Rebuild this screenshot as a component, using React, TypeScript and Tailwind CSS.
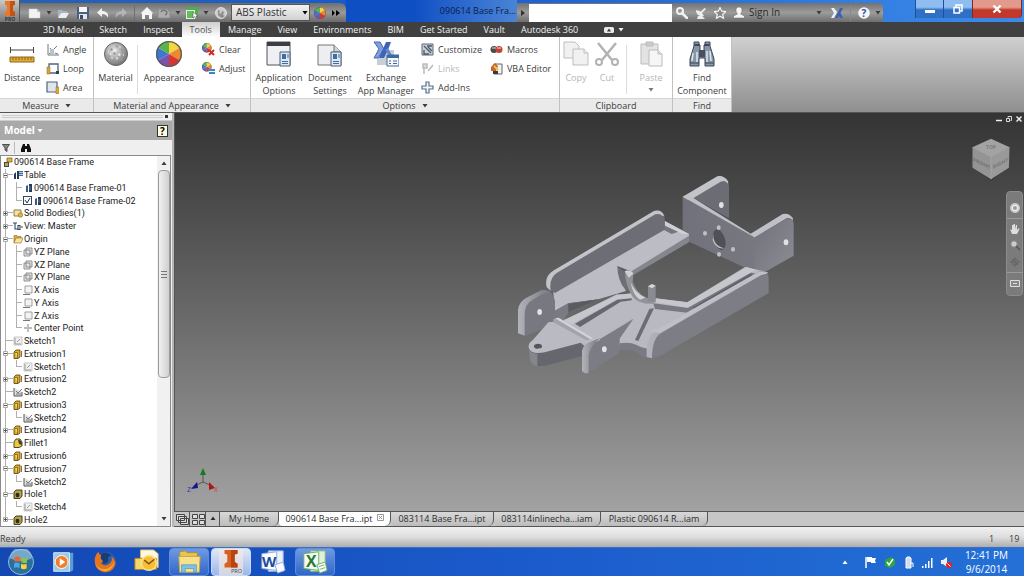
import { useState, type ReactNode } from 'react'
import clsx from 'clsx'

const TABS = ['3D Model', 'Sketch', 'Inspect', 'Tools', 'Manage', 'View', 'Environments', 'BIM', 'Get Started', 'Vault', 'Autodesk 360']

const DOCS = [
  { name: 'My Home', width: 'w-[59px]' },
  { name: '090614 Base Fra...ipt', width: 'w-[112px]' },
  { name: '083114 Base Fra...ipt', width: 'w-[103px]' },
  { name: '083114inlinecha...iam', width: 'w-[107px]' },
  { name: 'Plastic 090614 R...iam', width: 'w-[107px]' },
]

type NodeKind = 'table' | 'member' | 'bodies' | 'view' | 'folder' | 'plane' | 'axis' | 'point' | 'sketch' | 'sketchUsed' | 'extrusion' | 'fillet' | 'hole'

type TreeNode = {
  label: string
  kind: NodeKind
  level: 1 | 2
  sign?: '+' | '-'
  last?: boolean
  checked?: boolean
}

const TREE: TreeNode[] = [
  { label: 'Table', kind: 'table', level: 1, sign: '-' },
  { label: '090614 Base Frame-01', kind: 'member', level: 2 },
  { label: '090614 Base Frame-02', kind: 'member', level: 2, last: true, checked: true },
  { label: 'Solid Bodies(1)', kind: 'bodies', level: 1, sign: '+' },
  { label: 'View: Master', kind: 'view', level: 1, sign: '+' },
  { label: 'Origin', kind: 'folder', level: 1, sign: '-' },
  { label: 'YZ Plane', kind: 'plane', level: 2 },
  { label: 'XZ Plane', kind: 'plane', level: 2 },
  { label: 'XY Plane', kind: 'plane', level: 2 },
  { label: 'X Axis', kind: 'axis', level: 2 },
  { label: 'Y Axis', kind: 'axis', level: 2 },
  { label: 'Z Axis', kind: 'axis', level: 2 },
  { label: 'Center Point', kind: 'point', level: 2, last: true },
  { label: 'Sketch1', kind: 'sketch', level: 1 },
  { label: 'Extrusion1', kind: 'extrusion', level: 1, sign: '-' },
  { label: 'Sketch1', kind: 'sketch', level: 2, last: true },
  { label: 'Extrusion2', kind: 'extrusion', level: 1, sign: '+' },
  { label: 'Sketch2', kind: 'sketchUsed', level: 1 },
  { label: 'Extrusion3', kind: 'extrusion', level: 1, sign: '-' },
  { label: 'Sketch2', kind: 'sketchUsed', level: 2, last: true },
  { label: 'Extrusion4', kind: 'extrusion', level: 1, sign: '+' },
  { label: 'Fillet1', kind: 'fillet', level: 1 },
  { label: 'Extrusion6', kind: 'extrusion', level: 1, sign: '+' },
  { label: 'Extrusion7', kind: 'extrusion', level: 1, sign: '-' },
  { label: 'Sketch2', kind: 'sketchUsed', level: 2, last: true },
  { label: 'Hole1', kind: 'hole', level: 1, sign: '-' },
  { label: 'Sketch4', kind: 'sketch', level: 2, last: true },
  { label: 'Hole2', kind: 'hole', level: 1, sign: '+' },
]

export default function App() {
  return (
    <div className="flex h-screen flex-col overflow-hidden bg-[#c4c4c4] font-['Open_Sans',sans-serif] text-[9px] text-[#3c3c3c]">
      <TitleBar />
      <RibbonTabs />
      <Ribbon />
      <div className="flex min-h-0 flex-1">
        <ModelBrowser />
        <div className="flex min-w-0 flex-1 flex-col">
          <Viewport />
          <DocumentTabs />
        </div>
      </div>
      <footer className="flex h-5 shrink-0 items-center bg-linear-to-b from-[#f0f0f0] via-[#dedede] to-[#adadad] pt-1">
        <span className="flex-1">Ready</span>
        <span className="w-5">1</span>
        <span className="w-[15px]">19</span>
      </footer>
      <Taskbar />
    </div>
  )
}

/* ---------- title bar ---------- */

function TitleBar() {
  return (
    <header className="flex h-[22px] shrink-0 items-end bg-linear-to-r from-[#2a62b0] via-[#1659cd] via-40% to-[#3c8be8]">
      <button aria-label="Application menu" className="flex h-[22px] w-5 items-center justify-center border-r border-[#555] bg-linear-to-b from-[#c9c9c9] to-[#777]">
        <InventorLogo className="h-5 w-4" />
      </button>
      <div className="flex h-[19px] w-[326px] shrink-0 items-center rounded-tr-md bg-linear-to-b from-[#6f6f6f] via-[#9a9a9a] to-[#6b6b6b]">
        <QuickButton label="New" className="ml-2 w-3.5">
          <path d="M0 2h8l3 3v6H0z" fill="#f3f3f3" stroke="#ccc" strokeWidth=".5" />
          <path d="M8 2v3h3" fill="#bbb" />
        </QuickButton>
        <Caret className="ml-1" />
        <QuickButton label="Open" className="ml-1 w-3.5">
          <path d="M1 3h4l1 1h4v2H4l-2 4H1z" fill="#a9b4bf" />
          <path d="M4 6h8l-3 5H1z" fill="#e9eef2" />
        </QuickButton>
        <QuickButton label="Save" className="ml-1.5 w-3.5">
          <path d="M0 0h12v12H0z" fill="#4d5f80" />
          <path d="M2 0h8v5H2z" fill="#f7f7f7" />
          <path d="M2 7h8v5H2z" fill="#dfe6ee" />
          <path d="M3 8h3v4H3z" fill="#3b4a66" />
        </QuickButton>
        <QuickButton label="Undo" className="ml-1.5 w-3.5">
          <path d="M5 1v3c4 0 7 2 6 7-1-3-3-4-6-4v3L0 5.500z" fill="#f4f4f4" />
        </QuickButton>
        <QuickButton label="Redo" className="ml-1 w-3.5">
          <path d="M7 1v3C3 4 0 6 1 11c1-3 3-4 6-4v3l5-4.500z" fill="#b5b5b5" />
        </QuickButton>
        <span className="mx-1.5 h-4 w-px shrink-0 bg-[#6f6f6f]" />
        <QuickButton label="Home" className="w-3">
          <path d="M6 0l6 6-1 1v5H8V8H4v4H1V7L0 6z" fill="#f4f4f4" />
        </QuickButton>
        <QuickButton label="Return" className="ml-1 w-3.5">
          <path d="M0 2h9l3 3v6H0z" fill="#adadad" stroke="#8a8a8a" />
          <path d="M3 5a3 2.500 0 1 1 4 3" fill="none" stroke="#777" strokeWidth="1.500" />
        </QuickButton>
        <Caret className="ml-1" />
        <QuickButton label="Select" className="ml-1 w-3.5">
          <path d="M0 3l3-3h9v9l-3 3H0z" fill="#4faf4c" />
          <path d="M0 3h9v9H0z" fill="#e3f1e0" />
          <path d="M1 4h7v7H1z" fill="#69bb60" />
          <path d="M7 5v6l1.500-1.500L10 12l1-.6L10 9h2z" fill="#fff" stroke="#444" strokeWidth=".5" />
        </QuickButton>
        <Caret className="ml-1" />
        <QuickButton label="Material" className="ml-1.5 w-3">
          <circle cx="6" cy="6" r="5.500" fill="#ccc" stroke="#f2f2f2" strokeWidth=".7" />
          <path d="M3 3l2 1-1 2 2 1 1-3 2 1-1 3 2 1-3 2-2-1-2-2z" fill="#8d8d8d" />
        </QuickButton>
        <label className="relative ml-1 flex h-[17px] w-[79px] shrink-0 items-center border border-[#555] bg-linear-to-b from-[#f2f2f2] to-[#d2d2d2]">
          <select aria-label="Material" className="h-full w-full appearance-none pl-1 text-[10px] text-[#333]">
            <option>ABS Plastic</option>
          </select>
          <Caret className="pointer-events-none absolute right-px text-black" />
        </label>
        <QuickButton label="Appearance" className="ml-1 w-3">
          <ColorWheel />
        </QuickButton>
        <button aria-label="More commands" className="ml-1.5 text-black">
          <svg viewBox="0 0 8 6" className="h-1.5 w-2" fill="currentColor"><path d="M0 0l3 3-3 3zM4 0l4 3-4 3z" /></svg>
        </button>
      </div>
      <h1 className="flex h-full min-w-0 flex-1 items-center justify-end bg-linear-to-r from-[#0f4fc4] from-40% to-[#4a84d6] pr-px text-[#0c1d44]">090614 Base Fra...</h1>
      <div className="flex h-[19px] w-[366px] shrink-0 items-center rounded-tr-sm bg-linear-to-b from-[#727272] via-[#9c9c9c] to-[#6e6e6e]">
        <svg viewBox="0 0 4 6" className="mx-1 h-1.5 w-1 shrink-0" fill="#333"><path d="M0 0l4 3-4 3z" /></svg>
        <input aria-label="Search help" className="h-[18px] w-[143px] shrink-0 bg-white px-1 outline-none" />
        <QuickButton label="Subscription" className="ml-1 w-3">
          <circle cx="4" cy="4" r="3" fill="none" stroke="#f1f1f1" strokeWidth="2" />
          <path d="M6 6l5 5" stroke="#f1f1f1" strokeWidth="2.600" strokeLinecap="round" />
        </QuickButton>
        <QuickButton label="Communication" className="ml-[7px] w-3">
          <path d="M1 3c0 5 4 7 8 6L7 6 11 2 9.500 1 6 4.500z" fill="#ededed" />
          <path d="M3 9l-1 3h8L7 9z" fill="#ededed" />
        </QuickButton>
        <QuickButton label="Favorites" className="ml-[7px] w-3">
          <path d="M6 .5l1.700 3.700 4 .4-3 2.700.9 4L6 9.200l-3.600 2.100.9-4-3-2.700 4-.4z" fill="#888" stroke="#f4f4f4" strokeWidth="1.200" />
        </QuickButton>
        <button className="ml-[7px] flex items-center text-[10px] text-[#2b2b2b]">
          <svg viewBox="0 0 12 12" className="mr-1 h-3 w-3">
            <path d="M3 3a3 3 0 0 1 6 0c0 2-.7 3-1.500 4l4 2v2H.5V9l4-2C3.700 6 3 5 3 3z" fill="#f4f4f4" stroke="#555" strokeWidth=".4" />
          </svg>
          Sign In
        </button>
        <Caret className="ml-auto" />
        <QuickButton label="Exchange Apps" className="ml-2 w-3.5">
          <path d="M0 1h3l3 4-3 6H0l3-5z" fill="#eef3fb" />
          <path d="M12 1H9L4 11h3zM7 7l2 4h3L9 5z" fill="#3b62b5" />
        </QuickButton>
        <span className="mx-1.5 h-4 w-px bg-[#888]" />
        <QuickButton label="Help" className="mr-1 w-3.5">
          <circle cx="6" cy="6" r="5.800" fill="#f5f7fb" />
          <text x="6" y="9.500" textAnchor="middle" fontSize="10" fontWeight="700" fill="#2f4fa8">?</text>
        </QuickButton>
        <Caret className="mr-0.5" />
      </div>
      <div className="mr-[2px] ml-8 flex h-[18px] shrink-0 self-start">
        <button aria-label="Minimize" className="flex w-[29px] items-center justify-center border-x border-[#1e4f9a] bg-linear-to-b from-[#8fbdf0] from-40% to-[#2f6fc4] to-55%">
          <span className="mt-1 h-[3px] w-2.5 bg-white" />
        </button>
        <button aria-label="Restore" className="flex w-7 items-center justify-center bg-linear-to-b from-[#8fbdf0] from-40% to-[#2f6fc4] to-55%">
          <svg viewBox="0 0 10 10" className="h-2.5 w-2.5" fill="none" stroke="#fff" strokeWidth="1.500"><path d="M3 3V1h6v6H7" /><path d="M1 3.500h5.500v5.500H1z" /></svg>
        </button>
        <button aria-label="Close" className="flex w-[50px] items-center justify-center rounded-br border-x border-[#7c2a20] bg-linear-to-b from-[#e29a8c] from-40% to-[#c2392c] to-55%">
          <svg viewBox="0 0 10 10" className="h-2.5 w-2.5" stroke="#fff" strokeWidth="2.400"><path d="M1.500 1.500l7 7M8.500 1.500l-7 7" /></svg>
        </button>
      </div>
    </header>
  )
}

function QuickButton({ label, className, children }: { label: string, className?: string, children: ReactNode }) {
  return (
    <button aria-label={label} className={clsx('shrink-0', className)}>
      <svg viewBox="0 0 12 12" className="h-3 w-full">{children}</svg>
    </button>
  )
}

function Caret({ className }: { className?: string }) {
  return (
    <svg viewBox="0 0 6 4" className={clsx('h-1 w-1.5 shrink-0', className)} fill="currentColor"><path d="M.5 0h5L3 3.500z" /></svg>
  )
}

/* ---------- ribbon ---------- */

function RibbonTabs() {
  const [active, setActive] = useState('Tools')

  return (
    <nav className="flex h-[15px] shrink-0 items-stretch bg-[#404040] pl-[35px] leading-[15px] text-[#f0f0f0]">
      {TABS.map((tab) => (
        <button
          key={tab}
          onClick={() => setActive(tab)}
          className={clsx('px-2 whitespace-nowrap', active === tab && 'bg-linear-to-b from-[#cfcfcf] to-white text-[#555]')}
        >
          {tab}
        </button>
      ))}
      <button aria-label="Ribbon display" className="ml-[18px] flex items-center">
        <svg viewBox="0 0 10 6" className="h-1.5 w-2.5"><rect width="10" height="6" rx="1.500" fill="#e8e8e8" /><path d="M3 4.500L5 1.500l2 3z" fill="#333" /></svg>
        <Caret className="ml-1" />
      </button>
    </nav>
  )
}

function Ribbon() {
  return (
    <section className="flex h-[76px] shrink-0 border-b border-[#555] bg-linear-to-b from-[#d0d0d0] to-[#8f8f8f]">
      <Panel title="Measure" width="w-[94px]" menu>
        <BigButton label="Distance" width="w-11"><DistanceIcon /></BigButton>
        <div className="flex flex-col">
          <SmallButton label="Angle">
            <path d="M2 1v11h11" fill="none" stroke="#777" />
            <path d="M3 11L11 3M4 5l4 6M9 10l3 1" stroke="#6d7d90" fill="none" />
            <path d="M4 6h4v5H4z" fill="#b9c3ce" />
          </SmallButton>
          <SmallButton label="Loop">
            <path d="M3 2h9v9H3z" fill="none" stroke="#51647d" strokeWidth="1.300" />
            <path d="M1 5h3v7H1z" fill="#d9a441" stroke="#8b6a22" strokeWidth=".5" />
            <path d="M10 9h3v3h-3z" fill="#2f3f55" />
          </SmallButton>
          <SmallButton label="Area">
            <path d="M1 1h10v10H1z" fill="#dfe6ee" stroke="#51647d" strokeWidth="1.200" />
            <path d="M10 6h3v7h-3z" fill="#e0aa3c" stroke="#8b6a22" strokeWidth=".5" />
          </SmallButton>
        </div>
      </Panel>
      <Panel title="Material and Appearance" width="w-[157px]" menu>
        <BigButton label="Material" width="w-[43px]"><MaterialIcon /></BigButton>
        <span className="my-1 w-px bg-[#ddd]" />
        <BigButton label="Appearance" width="w-[62px]"><svg viewBox="0 0 12 12" className="h-full w-full"><ColorWheel /></svg></BigButton>
        <div className="flex flex-col">
          <SmallButton label="Clear">
            <g transform="scale(.8)"><ColorWheel /></g>
            <path d="M7 7l5 5M12 7l-5 5" stroke="#cf2a22" strokeWidth="2" />
          </SmallButton>
          <SmallButton label="Adjust">
            <g transform="scale(.8)"><ColorWheel /></g>
            <path d="M6 8h7M7 11h6" stroke="#3f86c5" strokeWidth="2" />
          </SmallButton>
        </div>
      </Panel>
      <Panel title="Options" width="w-[309px]" menu>
        <BigButton label={'Application\nOptions'} width="w-14">
          <svg viewBox="0 0 26 26" className="h-full w-full">
            <path d="M1 1h23v23H1z" fill="#eef0f3" stroke="#555" />
            <path d="M1 1h23v4H1z" fill="#3c3c46" />
            <DialogGlyph />
          </svg>
        </BigButton>
        <BigButton label={'Document\nSettings'} width="w-[46px]">
          <svg viewBox="0 0 26 26" className="h-full w-full">
            <path d="M1 4h16l7 7v13H1z" fill="#eceef1" stroke="#777" />
            <path d="M17 4v7h7" fill="#cfd4da" stroke="#777" />
            <DialogGlyph />
          </svg>
        </BigButton>
        <BigButton label={'Exchange\nApp Manager'} width="w-[66px]">
          <svg viewBox="0 0 26 26" className="h-full w-full">
            <path d="M4 9h17v15H4z" fill="#c9ced6" />
            <path d="M1 1h6l4 7-6 9H1l5-9z" fill="#7fa0dc" stroke="#4468b4" />
            <path d="M18 1h-5L6 17h5l4-8z" fill="#3e64b9" />
            <path d="M12 9l5 7h3l-5-9z" fill="#5f86cf" />
            <path d="M14 14h12v11H14z" fill="#f6f8fb" stroke="#3f6ba0" />
            <path d="M14 14h12v3H14z" fill="#3f6ba0" />
            <path d="M16 20h2M16 22.500h2M20 20h4M20 22.500h4" stroke="#3f6ba0" />
          </svg>
        </BigButton>
        <div className="flex w-[69px] flex-col">
          <SmallButton label="Customize">
            <path d="M1 1h11v11H1z" fill="#c9d0d8" stroke="#5d6874" />
            <path d="M3 3l7 7M6 3h5M3 7v4h5M7 4l4 4" stroke="#4c5a68" strokeWidth="1.300" fill="none" />
          </SmallButton>
          <SmallButton label="Links" disabled>
            <path d="M2 2h4v4H2zM3 6v6M7 9l5-6" fill="#ddd" stroke="#bbb" strokeWidth="1.500" />
          </SmallButton>
          <SmallButton label="Add-Ins">
            <path d="M5 1h3v4h4v3H8v4H5V8H1V5h4z" fill="#f2f5f8" stroke="#56708a" strokeWidth="1.200" />
          </SmallButton>
        </div>
        <div className="flex flex-col">
          <SmallButton label="Macros">
            <circle cx="4" cy="6.500" r="3.500" fill="#4a4a4a" />
            <circle cx="9" cy="6.500" r="3.500" fill="#c2413a" />
            <path d="M2 5h4M7 5h4" stroke="#d8e8c8" strokeWidth="1.200" />
          </SmallButton>
          <SmallButton label="VBA Editor">
            <path d="M4 2h8v10H4z" fill="#f2f2f2" stroke="#666" />
            <path d="M1 5l4-4 3 3-2 5H1z" fill="#c9662c" />
            <path d="M3 9h5v3H3z" fill="#3b3b3b" />
            <path d="M4 4l4 4" stroke="#f0c04a" strokeWidth="2" />
          </SmallButton>
        </div>
      </Panel>
      <Panel title="Clipboard" width="w-[113px]">
        <BigButton label="Copy" width="w-8" disabled>
          <svg viewBox="0 0 26 26" className="h-full w-full" fill="#f1f1f1" stroke="#bdbdbd">
            <path d="M1 1h11l4 4v12H1z" /><path d="M10 8h11l4 4v12H10z" /><path d="M21 8v4h4" />
          </svg>
        </BigButton>
        <BigButton label="Cut" width="w-[30px]" disabled>
          <svg viewBox="0 0 26 26" className="h-full w-full" fill="none" stroke="#b2b2b2">
            <path d="M4 2l14 17M22 2L8 19" strokeWidth="2.500" />
            <circle cx="5" cy="21" r="3" strokeWidth="2" /><circle cx="21" cy="21" r="3" strokeWidth="2" />
          </svg>
        </BigButton>
        <span className="mx-1 my-1 w-px bg-[#ddd]" />
        <BigButton label="Paste" width="w-10" disabled menu>
          <svg viewBox="0 0 26 26" className="h-full w-full" fill="#e3e3e3" stroke="#bbb">
            <path d="M3 3h17v20H3z" /><path d="M8 1h7v4H8z" fill="#ccc" /><path d="M11 9h9l4 4v12H11z" fill="#f6f6f6" /><path d="M20 9v4h4" />
          </svg>
        </BigButton>
      </Panel>
      <Panel title="Find" width="w-[59px]">
        <BigButton label={'Find\nComponent'} width="w-[58px]"><BinocularsIcon /></BigButton>
      </Panel>
    </section>
  )
}

function Panel({ title, width, menu, children }: { title: string, width: string, menu?: boolean, children: ReactNode }) {
  return (
    <div className={clsx('flex shrink-0 flex-col border-r border-[#c2c2c2] bg-white', width)}>
      <div className="flex flex-1 pt-1">{children}</div>
      <h2 className="flex h-[14px] items-center justify-center border-t border-[#d5d5d5] bg-[#eaeaea] leading-3">
        {title}
        {menu && <Caret className="ml-1.5" />}
      </h2>
    </div>
  )
}

function BigButton({ label, width, disabled, menu, children }: { label: string, width: string, disabled?: boolean, menu?: boolean, children: ReactNode }) {
  return (
    <button disabled={disabled} className={clsx('flex shrink-0 flex-col items-center leading-[13px]', width, disabled && 'text-[#b5b5b5]')}>
      <span className="mb-1 flex h-[26px] w-[26px] items-center">{children}</span>
      <span className="whitespace-pre">{label}</span>
      {menu && <Caret className="mt-1 text-[#777]" />}
    </button>
  )
}

function SmallButton({ label, disabled, children }: { label: string, disabled?: boolean, children: ReactNode }) {
  return (
    <button disabled={disabled} className={clsx('flex h-[19px] items-center pb-0.5 pl-0.5 whitespace-nowrap', disabled && 'text-[#bbb]')}>
      <svg viewBox="0 0 13 13" className="mr-1 h-[13px] w-[13px]">{children}</svg>
      {label}
    </button>
  )
}

// 12x12 pie used by every appearance icon
function ColorWheel() {
  return (
    <g>
      <path d="M6 6V0a6 6 0 0 1 5.200 3z" fill="#f5d640" />
      <path d="M6 6l5.200-3a6 6 0 0 1 0 6z" fill="#e88a30" />
      <path d="M6 6l5.200 3A6 6 0 0 1 6 12z" fill="#d8362f" />
      <path d="M6 6v6a6 6 0 0 1-5.200-3z" fill="#7a52b0" />
      <path d="M6 6L.8 9a6 6 0 0 1 0-6z" fill="#3b78cf" />
      <path d="M6 6L.8 3A6 6 0 0 1 6 0z" fill="#58b54a" />
      <circle cx="6" cy="6" r="5.700" fill="none" stroke="#5b5b5b" strokeWidth=".6" />
    </g>
  )
}

function DialogGlyph() {
  return (
    <g>
      <path d="M14 11h10v14H14z" fill="#dfe7f0" stroke="#4a5f78" />
      <path d="M16 13h4v5h-4z" fill="#3d6ea5" />
      <path d="M16 20.500h6M16 22.500h6M21 14h2M21 16h2" stroke="#3d6ea5" />
    </g>
  )
}

function DistanceIcon() {
  return (
    <svg viewBox="0 0 26 26" className="h-full w-full">
      <path d="M1 9h24M1.500 6v6M24.500 6v6" stroke="#444" />
      <path d="M1 16h24v5H1z" fill="#e5a832" stroke="#8d6a20" />
      <path d="M4 16v3M7 16v3M10 16v3M13 16v3M16 16v3M19 16v3M22 16v3" stroke="#8d6a20" />
    </svg>
  )
}

function MaterialIcon() {
  return (
    <svg viewBox="0 0 26 26" className="h-full w-full">
      <defs>
        <radialGradient id="ball" cx=".4" cy=".35" r=".65"><stop offset="0" stopColor="#e6e6e6" /><stop offset="1" stopColor="#777" /></radialGradient>
      </defs>
      <circle cx="13" cy="13" r="11.500" fill="url(#ball)" stroke="#666" />
      <path d="M7 8l2-1 1 2-2 1zM12 4l3 1-1 2zM18 8l3 1-1 2-2-1zM10 12l2-1 1 2-2 1zM4 14l3 1-1 2zM9 19l3-1 1 3zM17 17l3 1-2 2z" fill="#999" />
      <path d="M11 8l3 1-2 2zM16 12l2 2-3 1zM7 12l2 1-2 1zM13 16l2 1-1 2zM8 16l2 1-1 1zM16 5l2 1-1 1zM5 10l1 1-1 1zM20 13l1 1-1 1z" fill="#f5f5f5" />
    </svg>
  )
}

function BinocularsIcon() {
  return (
    <svg viewBox="0 0 26 26" className="h-full w-full">
      <path d="M5 1h5v3h1v6h4V4h1V1h5v4l4 13v7h-9v-8h-6v8H1v-7L5 5z" fill="#8796a8" stroke="#3c4654" />
      <path d="M5.500 4h5M15.500 4h5" stroke="#29323e" strokeWidth="1.500" />
      <path d="M4 12l-1 8M8 11v10M18 10v11M21 10l1 10" stroke="#e2e8ef" strokeWidth="1.500" />
      <path d="M10 9h6v7h-6z" fill="#46505e" />
      <path d="M1 22h9M16 22h9" stroke="#3c4654" />
    </svg>
  )
}

/* ---------- model browser ---------- */

function ModelBrowser() {
  return (
    <aside className="flex w-[174px] shrink-0 flex-col border-r-2 border-[#b5b5b5] bg-[#efefef]">
      <div className="flex h-2 shrink-0 items-center border-b border-[#ccc]">
        <span className="mx-0.5 h-[3px] flex-1 border-y border-[#ccc]" />
        <button aria-label="Close panel" className="mr-1 h-[3px] w-[3px] bg-[#333]" />
      </div>
      <div className="flex h-[19px] shrink-0 items-center bg-[#a9a9a9] px-1 text-[10px] font-bold text-white">
        Model
        <Caret className="ml-0.5 w-1" />
        <button aria-label="Help" className="ml-auto h-3 w-[11px] border border-[#333] bg-[#ffffe0] leading-[10px] text-black">?</button>
      </div>
      <div className="flex h-[15px] shrink-0 items-center">
        <button aria-label="Filter" className="ml-0.5">
          <svg viewBox="0 0 8 8" className="h-2 w-2"><path d="M.5.5h7L5 4v3.500L3 6V4z" fill="#888" stroke="#333" strokeWidth=".8" /></svg>
        </button>
        <span className="mx-1 h-3 w-px bg-[#bbb]" />
        <button aria-label="Find" className="ml-0.5">
          <svg viewBox="0 0 10 8" className="h-2 w-2.5"><path d="M2 0h2v2h2V0h2l2 5v3H6V5H4v3H0V5z" fill="#111" /></svg>
        </button>
      </div>
      <div className="mr-px flex min-h-0 flex-1 overflow-hidden border border-[#8a8a8a] bg-white">
        <ul className="flex min-w-0 flex-1 flex-col font-[Roboto,sans-serif] leading-3 text-[#222]">
          <li className="flex min-h-0 flex-1 items-center pl-0.5">
            <svg viewBox="0 0 10 10" className="mr-px h-2.5 w-2.5">
              <path d="M1 5h5v5H1z" fill="#3b4a66" /><path d="M4 1h5v4H4z" fill="#e0b542" stroke="#6b5415" strokeWidth=".7" /><path d="M2 6h3v3H2z" fill="#c7a13a" />
            </svg>
            090614 Base Frame
          </li>
          {TREE.map((node, i) => (
            <TreeRow key={i} node={node} end={i === TREE.length - 1} />
          ))}
        </ul>
        <div className="flex w-[13px] shrink-0 flex-col items-center bg-[#f1f1f1]">
          <button aria-label="Scroll up" className="flex h-[14px] items-center"><Caret className="rotate-180" /></button>
          <div className="flex h-[208px] w-3 items-center justify-center rounded-sm border border-[#9b9b9b] bg-linear-to-r from-[#f1f1f1] to-[#cfcfcf]">
            <svg viewBox="0 0 6 7" className="h-[7px] w-1.5" stroke="#777"><path d="M0 .5h6M0 3.500h6M0 6.500h6" /></svg>
          </div>
          <button aria-label="Scroll down" className="mt-auto flex h-[14px] items-center"><Caret /></button>
        </div>
      </div>
    </aside>
  )
}

function TreeRow({ node, end }: { node: TreeNode, end: boolean }) {
  const nested = node.level === 2
  return (
    <li className="flex min-h-0 flex-1 items-center whitespace-nowrap">
      <span className="relative flex w-3 self-stretch">
        <span className={clsx('w-[5px] border-r border-[#b0b0b0]', end && 'h-1/2')} />
        {!nested && <span className="h-1/2 flex-1 border-b border-[#b0b0b0]" />}
        {node.sign && (
          <button aria-label={node.sign === '+' ? 'Expand' : 'Collapse'} className="absolute top-1 left-0.5 flex h-[5px] w-[5px] items-center justify-center bg-white">
            <svg viewBox="0 0 5 5" className="h-[5px] w-[5px]" stroke="#555" fill="none">
              <path d="M.5.5h4v4h-4z" stroke="#aaa" />
              <path d="M1 2.500h3" />
              {node.sign === '+' && <path d="M2.500 1v3" />}
            </svg>
          </button>
        )}
      </span>
      {nested && (
        <span className="flex w-2.5 self-stretch">
          <span className={clsx('w-1 border-r border-[#b0b0b0]', node.last && 'h-1/2')} />
          <span className="h-1/2 w-[5px] border-b border-[#b0b0b0]" />
        </span>
      )}
      {node.checked ? (
        <label className="flex items-center">
          <input type="checkbox" defaultChecked className="peer sr-only" />
          <span className="flex h-[9px] w-[9px] border border-[#34495e] bg-white">
            <svg viewBox="0 0 7 7" className="h-[7px] w-[7px]" fill="none" stroke="#234"><path d="M1 3l2 3 3-5" /></svg>
          </span>
          <TreeIcon kind={node.kind} />
          {node.label}
        </label>
      ) : (
        <>
          <TreeIcon kind={node.kind} />
          {node.label}
        </>
      )}
    </li>
  )
}

function TreeIcon({ kind }: { kind: NodeKind }) {
  return (
    <svg viewBox="0 0 10 10" className="mr-px h-2.5 w-2.5 shrink-0">
      {kind === 'table' && <><path d="M1 4l2-2v7H1zM4 1h2v8H4z" fill="#223a5c" /><path d="M6 1h4v5H6z" fill="#4a6c9c" /><path d="M6 2.500h4M6 4.500h4" stroke="#fff" strokeWidth=".6" /></>}
      {kind === 'member' && <><path d="M3 3l2-1v7H3z" fill="#44597a" /><path d="M6 1h3v8H6z" fill="#223a5c" /><path d="M7 3v4" stroke="#8fa6c6" strokeWidth=".6" /></>}
      {kind === 'bodies' && <><path d="M1 2h7v6H1z" fill="#f3e3a6" stroke="#77632a" strokeWidth=".8" /><circle cx="7.500" cy="7" r="2.200" fill="#e3b93f" stroke="#77632a" strokeWidth=".6" /></>}
      {kind === 'view' && <path d="M0 2h4M2 2v6h3M5 4.500v4h2v-4zM8 6h2" fill="none" stroke="#33475f" strokeWidth="1.100" />}
      {kind === 'folder' && <><path d="M1 9V1.500h3l1 1h3V4" fill="#d9a941" stroke="#8c6c25" strokeWidth=".6" /><path d="M1 9l2-5h7L8 9z" fill="#fae29a" stroke="#8c6c25" strokeWidth=".6" /></>}
      {kind === 'plane' && <path d="M3 1h6v6H3zM1 3h6v6H1z" fill="#dcdcdc" fillOpacity=".7" stroke="#777" strokeWidth=".8" />}
      {kind === 'axis' && <><path d="M2 1h7v7H2z" fill="#f3f3f3" stroke="#888" strokeWidth=".8" /><path d="M0 9.500h7" stroke="#777" /></>}
      {kind === 'point' && <path d="M5 1v8M1 5h8" stroke="#bbb" strokeWidth="1.800" />}
      {kind === 'sketch' && <><path d="M1 1h8v8H1z" fill="#f0f0f0" stroke="#b5b5b5" strokeWidth=".7" /><path d="M2 2v6h6M4 6l3-3" stroke="#999" fill="none" /></>}
      {kind === 'sketchUsed' && <><path d="M1 1v8h8V5" stroke="#555" fill="#e0e0e0" /><path d="M3 4l2 2 4-4M3 7h5" stroke="#777" fill="none" /></>}
      {kind === 'extrusion' && <><path d="M1 3l2-2h4v7L5 9.500H1z" fill="#dfae27" stroke="#4d3d10" strokeWidth=".8" /><path d="M2 3.500h2.500V9" fill="#f7dc6c" stroke="#4d3d10" strokeWidth=".6" /><path d="M8.500 2v6" stroke="#a5623b" /></>}
      {kind === 'fillet' && <><path d="M1 4l2-3h4l2 3v4L6 9.500H1z" fill="#e9c843" stroke="#40360f" strokeWidth=".9" /><path d="M5 2c3 0 4 2 4 5L6 6z" fill="#3f3f37" /></>}
      {kind === 'hole' && <><path d="M1 3l2-2h6v6L7 9.500H1z" fill="#b7a242" stroke="#333019" strokeWidth=".9" /><ellipse cx="4.500" cy="6" rx="2" ry="2.200" fill="#2c2c24" /></>}
    </svg>
  )
}

/* ---------- viewport ---------- */

function Viewport() {
  return (
    <main className="relative min-h-0 flex-1 overflow-hidden border-l border-[#555] bg-linear-to-b from-[#343434] to-[#a2a2a2]">
      <BaseFrame />
      <div className="absolute top-0.5 right-0.5 flex items-center gap-1 text-white">
        <button aria-label="Minimize document"><svg viewBox="0 0 6 8" className="h-2 w-1.5"><path d="M0 5.500h6" stroke="#eee" strokeWidth="1.500" /></svg></button>
        <button aria-label="Restore document"><svg viewBox="0 0 6 8" className="h-2 w-1.5" fill="none" stroke="#ddd"><path d="M2 2.500v-1h3.500v4h-1M.5 3.500h3v3h-3z" /></svg></button>
        <button aria-label="Close document"><svg viewBox="0 0 6 8" className="h-2 w-1.5" stroke="#eee" strokeWidth="1.500"><path d="M.5 1.500l5 5M5.500 1.500l-5 5" /></svg></button>
      </div>
      <svg viewBox="0 0 120 130" className="absolute top-[25px] right-[13px] h-[43px] w-10">
        <path d="M8 90l52 40 52-40-52 20z" fill="#222" opacity=".35" />
        <path d="M60 2l56 26-56 30L4 28z" fill="#a3a3a3" />
        <path d="M4 28l56 30v67L4 90z" fill="#949494" />
        <path d="M116 28L60 58v67l54-35z" fill="#999" />
        <path d="M4 28l56 30 56-30M60 58v67" fill="none" stroke="#acacac" strokeWidth="2" />
        <text x="60" y="34" textAnchor="middle" fontSize="15" fontWeight="700" fill="#7d7d7d">TOP</text>
        <text transform="matrix(1 .5 0 1 32 82)" textAnchor="middle" fontSize="15" fontWeight="700" fill="#707070">FRONT</text>
        <text transform="matrix(1 -.5 0 1 88 82)" textAnchor="middle" fontSize="15" fontWeight="700" fill="#757575">RIGHT</text>
      </svg>
      <div className="absolute top-[78px] right-px flex h-[105px] w-[17px] flex-col items-center justify-around rounded-sm border border-[#8c8c8c] bg-[#7b7b7b] pt-2 pb-1">
        <NavButton label="Steering wheel"><circle cx="6" cy="6" r="5" fill="#ccc" /><circle cx="6" cy="6" r="2.500" fill="#999" stroke="#fff" /></NavButton>
        <span className="h-px w-4 bg-[#999]" />
        <NavButton label="Pan"><path d="M3 11L1 6l2 1V2h1.500v4V1H6v5l1-4h1v5l2-2 .5 1L8 11z" fill="#ddd" /></NavButton>
        <NavButton label="Zoom"><circle cx="5" cy="5" r="3" fill="#ccc" stroke="#999" /><path d="M7 7l4 4" stroke="#555" strokeWidth="1.500" /></NavButton>
        <NavButton label="Orbit"><path d="M6 1v10M1 6h10M3 3l6 6" stroke="#666" strokeWidth="1" /><circle cx="6" cy="6" r="3" fill="none" stroke="#666" /></NavButton>
        <span className="h-px w-4 bg-[#999]" />
        <NavButton label="Look at"><path d="M1.500 3.500h9v6h-9z" fill="#888" stroke="#ddd" /><path d="M4 6.500h4" stroke="#ddd" /></NavButton>
      </div>
      <svg viewBox="0 0 32 30" className="absolute bottom-3.5 left-3 h-[30px] w-8">
        <path d="M16 15V5M16 15l9 4M16 15l-9 4" stroke="#444" strokeWidth=".8" />
        <path d="M16 1l3 7h-6z" fill="#157c1c" />
        <path d="M22 15l6 6-6 2z" fill="#b01515" />
        <path d="M10 15l1 6-7 1z" fill="#15158f" />
        <text x="0" y="25" fontSize="7" fill="#3535b5">Z</text>
        <text x="27" y="25" fontSize="7" fill="#d04040">X</text>
      </svg>
    </main>
  )
}

function NavButton({ label, children }: { label: string, children: ReactNode }) {
  return (
    <button aria-label={label}><svg viewBox="0 0 12 12" className="h-3 w-3">{children}</svg></button>
  )
}

function BaseFrame() {
  return (
    <svg viewBox="0 0 930 660" className="absolute top-[52px] left-[325px] h-[220px] w-[310px]">
      <defs>
        <linearGradient id="sideFace" x1="0" y1="0" x2="1" y2="0"><stop offset="0" stopColor="#70717a" /><stop offset="1" stopColor="#777880" /></linearGradient>
        <linearGradient id="flange" x1="0" y1="0" x2="1" y2="1"><stop offset="0" stopColor="#70717a" /><stop offset="1" stopColor="#8b8c94" /></linearGradient>
        <linearGradient id="round" x1="0" y1="0" x2="1" y2="0"><stop offset="0" stopColor="#b3b4bb" /><stop offset="1" stopColor="#74757c" /></linearGradient>
      </defs>

      {/* rear bracket */}
      <path d="M580 98L664 47Q684 42 687 62V160L668 150z" fill="#6b6c74" />
      <path d="M548 95L652 34Q672 30 685 50L684 56Q676 44 662 50L582 98 560 108z" fill="#c3c4ca" />
      <path d="M548 95L765 215V322L567 230V207L548 195z" fill="url(#sideFace)" />
      <path d="M548 95L566 90 752 206 848 147Q868 142 879 160L878 168Q868 154 856 162L766 218z" fill="#bfc0c7" />
      <path d="M765 216L858 161Q880 156 881 176V272L800 318 765 320z" fill="url(#flange)" />
      <ellipse cx="664" cy="120" rx="7" ry="9" fill="#e2e2e4" />
      <ellipse cx="858" cy="232" rx="7" ry="9" fill="#e2e2e4" />
      <ellipse cx="658" cy="224" rx="17" ry="32" transform="rotate(-18 658 224)" fill="#505158" />
      <path d="M640 202Q636 240 672 250 648 254 638 226z" fill="#bbbcc2" />
      <g fill="#bfc0c5">
        <ellipse cx="615" cy="205" rx="6" ry="7" /><ellipse cx="656" cy="188" rx="6" ry="7" />
        <ellipse cx="699" cy="253" rx="6" ry="7" /><ellipse cx="657" cy="268" rx="6" ry="7" />
      </g>

      {/* left rail and floor */}
      <path d="M160 382L494 188V168L567 207V216L390 318 352 303 378 378 295 403 205 415 165 438z" fill="#bcbdc4" />
      <path d="M388 318L567 207V232L400 330z" fill="#85868d" />
      <path d="M388 308L548 212 567 207 567 212 392 320z" fill="#bcbdc4" />
      <path d="M494 182L535 200 515 207 482 190z" fill="#75767d" />
      <path d="M494 168L567 207 548 207 494 180z" fill="#cfd0d5" />
      <path d="M140 368Q134 332 162 316L462 138Q484 132 494 154V194L165 384z" fill="#6c6d75" />
      <path d="M140 366Q132 334 162 316L462 138Q484 132 493 152L486 152Q480 144 466 148L170 324Q146 340 152 378z" fill="#c3c4ca" />
      <path d="M163 438L205 415 297 403 205 442 192 466 165 462z" fill="#797a82" />
      <path d="M205 416L297 403 205 442z" fill="#5a5b62" />

      {/* middle deck */}
      <path d="M190 468L350 388 400 390 440 412 462 400 562 412 735 306 805 322 480 560 356 545 250 520z" fill="#b9bac1" />
      <path d="M225 476L352 404 395 400 395 406 362 410 240 486z" fill="#66676e" />
      <path d="M190 466L352 390 398 384 400 398 352 402 212 479z" fill="#c6c7cc" />
      <path d="M398 462L300 512 310 548 358 545 358 520z" fill="#80818a" />
      <path d="M405 525L448 432 462 430 415 528z" fill="#6b6c74" />
      <path d="M460 415L560 428 752 322 766 326 568 444 465 432z" fill="#777880" />
      <path d="M468 400L562 412 740 306 768 314 564 428 466 412z" fill="#c6c7cc" />
      <path d="M578 428L752 326 760 332 588 434z" fill="#5f6067" />
      <path d="M358 535Q390 530 410 540 430 552 460 552L456 580 432 578Q410 556 380 556L358 556z" fill="#797a82" />

      {/* bearing saddle */}
      <path d="M352 303L374 322 392 378 376 374Q352 345 352 303z" fill="#6e6f76" />
      <path d="M374 318Q392 312 400 330L398 350Q410 384 436 396L462 408 462 416Q420 420 398 396 376 360 374 318z" fill="#92939a" />
      <path d="M374 318Q392 312 400 326L386 338z" fill="#cfd0d4" />
      <path d="M392 352Q404 384 436 398L420 404Q398 390 392 352z" fill="#d0d1d5" />
      <path d="M444 364L456 357 467 362V412L444 408z" fill="#8a8b92" />
      <path d="M444 364L456 357 467 362 456 370z" fill="#d5d6da" />

      {/* right rail */}
      <path d="M452 578Q444 510 478 494L782 322Q804 316 806 340V384L500 562Q470 582 452 578z" fill="#7c7d85" />
      <path d="M440 566Q438 510 474 492L776 320Q796 314 804 330 792 326 782 332L484 504Q456 520 456 580L440 576z" fill="url(#round)" />
      <path d="M452 500Q460 494 474 492L776 320Q794 316 802 326L784 330 480 504z" fill="#bfc0c7" />

      {/* front-left lug */}
      <path d="M54 505V440Q56 408 84 396L124 376Q160 374 165 408V470L110 500 80 512z" fill="#777880" />
      <path d="M54 505V436Q56 408 84 396L124 376Q146 372 158 388 142 380 126 388L98 404Q74 416 74 450V512z" fill="url(#round)" />
      <ellipse cx="119" cy="441" rx="7" ry="9" fill="#e2e2e4" />

      {/* nose */}
      <path d="M86 548L134 560 248 524V572L136 602Q96 608 90 586z" fill="#66676e" />
      <path d="M86 548Q84 534 98 526L145 472 160 470 275 528 248 532 134 562Q92 570 86 548z" fill="#babbc2" />
      <path d="M86 550Q90 566 112 566L112 604Q92 600 90 584z" fill="#85868d" />
      <path d="M160 462L176 458 280 520 270 532 160 472z" fill="#a3a4ab" />
      <path d="M165 460L176 458 280 520 276 526z" fill="#d2d3d7" />
      <ellipse cx="114" cy="544" rx="12" ry="8" fill="#54555b" />
      <path d="M103 547Q114 556 126 546 118 554 114 552z" fill="#ddd" />

      {/* front-right lug */}
      <path d="M246 618V562Q248 540 272 530L330 496 358 496V564L276 618Q260 626 246 618z" fill="#7b7c84" />
      <path d="M240 532L280 520 398 462 372 496 300 526Q268 538 260 548z" fill="#b9bac1" />
      <path d="M300 522L400 462 358 522V562L290 600z" fill="#7b7c84" />
      <path d="M246 618V558Q250 538 272 530L300 520Q270 544 266 570V624Q254 628 246 618z" fill="url(#round)" />
      <ellipse cx="313" cy="553" rx="7" ry="9" fill="#e2e2e4" />
    </svg>
  )
}

/* ---------- bottom bars ---------- */

function DocumentTabs() {
  const [active, setActive] = useState(1)

  return (
    <div className="flex h-4 shrink-0 border-y border-[#555] bg-[#c6c6c6] text-[#2e2e2e]">
      <button aria-label="Cascade" className="w-4 border-r border-[#555] pl-px">
        <svg viewBox="0 0 14 13" className="h-[13px] w-3.5" fill="#ddd" stroke="#444"><path d="M1.500 1.500h8v6h-8zM3.500 3.500h8v6h-8zM5.500 5.500h8v6h-8z" /></svg>
      </button>
      <button aria-label="Tile" className="w-4 border-r border-[#555] pl-px">
        <svg viewBox="0 0 14 13" className="h-[13px] w-3.5" fill="#ddd" stroke="#444"><path d="M1.500 1.500h5v4h-5zM8.500 1.500h5v4h-5zM1.500 7.500h5v4h-5zM8.500 7.500h5v4h-5z" /></svg>
      </button>
      <button aria-label="More documents" className="flex w-[14px] justify-center border-r border-[#555] pt-1"><Caret className="rotate-180" /></button>
      {DOCS.map((doc, i) => (
        <button
          key={doc.name}
          onClick={() => setActive(i)}
          className={clsx(
            'flex shrink-0 items-center justify-center rounded-br-md rounded-bl-sm border-r border-[#555] leading-3 whitespace-nowrap',
            doc.width,
            active === i ? 'bg-white' : 'bg-linear-to-b from-[#d8d8d8] to-[#bcbcbc]',
          )}
        >
          {doc.name}
          {active === i && (
            <svg viewBox="0 0 7 7" className="mb-1 ml-1 h-[7px] w-[7px]" fill="none" stroke="#999"><path d="M.5.5h6v6h-6zM2 2l3 3M5 2L2 5" /></svg>
          )}
        </button>
      ))}
    </div>
  )
}

function Taskbar() {
  return (
    <div className="flex h-[29px] shrink-0 items-center border-t border-[#3a6fc6] bg-linear-to-r from-[#1348b4] via-[#1b5acb] to-[#2470d6] pl-px text-white">
      <TaskButton label="Start">
        <circle cx="14" cy="14" r="13.500" fill="#2c6f9c" stroke="#9cc4dc" />
        <path d="M2 10a12 12 0 0 1 24 0Q14 16 2 10z" fill="#a8cde0" opacity=".6" />
        <path d="M7 9q3-2 6 0v5q-3-1.500-6 0z" fill="#f0632b" />
        <path d="M14.500 9.500q3 1.500 6 0v5q-3 1.500-6 0z" fill="#8cc63f" />
        <path d="M6.500 15.500q3-2 6 0v5q-3-1.500-6 0z" fill="#46a8e8" />
        <path d="M14 16q3 1.500 6 0v5q-3 1.500-6 0z" fill="#fbd13c" />
      </TaskButton>
      <TaskButton label="Media Player">
        <path d="M8 5l17-1v19l-4 2z" fill="#5e9bd0" />
        <path d="M4 4h17v20H4z" fill="#9cc8ea" stroke="#dceefb" />
        <circle cx="12.500" cy="14" r="7" fill="#ef7f2a" stroke="#fff" />
        <path d="M10.500 10l6 4-6 4z" fill="#fff" />
      </TaskButton>
      <TaskButton label="Firefox">
        <circle cx="15" cy="14" r="11" fill="#2b5fa8" />
        <path d="M10 5q6-3 11 2-3 0-4 3 2 4-3 6-5-1-4-6-1-3 0-5z" fill="#183d74" />
        <path d="M3 10q1-5 4-7 0 3 3 4-2 3 1 5 2 2-2 3 4 4 8 2 6-3 4-9 5 4 4 9-3 9-12 8Q2 23 3 10z" fill="#e8741f" />
        <path d="M4 16q4 8 13 5 6-3 7-8-1 10-10 11-8-1-10-8z" fill="#f6ae2d" />
      </TaskButton>
      <TaskButton label="Outlook">
        <path d="M7 1h14l5 4v15H7z" fill="#fdf7e3" stroke="#e2bb50" />
        <path d="M1 10h23v12H1z" fill="#f8d56a" stroke="#b9861c" />
        <circle cx="16" cy="15" r="8" fill="#f6bf35" stroke="#fbe49a" strokeWidth="1.500" />
        <path d="M11 12l5 4 6-5" fill="none" stroke="#7a5510" strokeWidth="1.500" />
      </TaskButton>
      <TaskButton label="Explorer" state="open">
        <path d="M4 3l6-1 2 2h11v19H4z" fill="#e8c555" stroke="#b28f2c" />
        <path d="M3 8h23l-1 17H4z" fill="#f7e28b" stroke="#c6a43d" />
        <path d="M6 17h16v8h-3v-4h-9v4H6z" fill="#7cc2e8" stroke="#4a92bd" strokeWidth=".7" />
      </TaskButton>
      <TaskButton label="Inventor" state="active">
        <path d="M1 0h26v28H1z" fill="#fbe9de" opacity=".6" />
        <path d="M7 1h14v4l-3 1v8l3 2v4H7v-4l3-2V6L7 5z" fill="#d9601e" />
        <path d="M14 1h7v4l-3 1v8l3 2v4h-7z" fill="#b4460f" />
        <text x="14" y="26" fontSize="6" fill="#444">PRO</text>
      </TaskButton>
      <TaskButton label="Word">
        <path d="M9 2h16v22H9z" fill="#e9f0fa" stroke="#9bb5db" />
        <path d="M2 5l16-2v20L2 21z" fill="#fff" stroke="#8eabd6" />
        <text x="10" y="19" textAnchor="middle" fontSize="16" fontWeight="700" fill="#1f4e9c">W</text>
        <path d="M16 17l9-3 2 9-8 3z" fill="#fafcff" stroke="#8eabd6" />
      </TaskButton>
      <TaskButton label="Excel" state="open">
        <path d="M9 2h16v22H9z" fill="#dff0dc" stroke="#7fb678" />
        <path d="M2 5l16-2v20L2 21z" fill="#f5fbf4" stroke="#6cad65" />
        <text x="10" y="19" textAnchor="middle" fontSize="17" fontWeight="700" fill="#2b7a2f">X</text>
        <path d="M16 17l9-3 2 9-8 3z" fill="#fafffa" stroke="#6cad65" />
        <path d="M18 19l6-2M19 22l6-2" stroke="#6cad65" />
      </TaskButton>
      <div className="ml-auto flex items-center gap-1.5 pr-4">
        <button aria-label="Show hidden icons"><Caret className="mr-2.5 rotate-180" /></button>
        <TrayButton label="Action Center"><path d="M2 1v11" stroke="#fff" strokeWidth="1.500" /><path d="M3 1h5v1h4l-1 3 1 2H7V6H3z" fill="#fff" /></TrayButton>
        <TrayButton label="Sync"><path d="M2 4l6-3 4 3v5l-5 3-5-2z" fill="#2ca83a" /><path d="M4 6l2 3 4-6" stroke="#fff" strokeWidth="1.500" fill="none" /></TrayButton>
        <TrayButton label="Battery"><path d="M4 2h1V1h3v1h1v10H4z" fill="#cfdcee" stroke="#fff" /><path d="M9 7h2v4" stroke="#fff" fill="none" /></TrayButton>
        <TrayButton label="Network"><path d="M1 10h1.500v2H1zM4 8h1.500v4H4zM7 5h1.500v7H7zM10 2h1.500v10H10z" fill="#fff" /></TrayButton>
        <TrayButton label="Volume muted"><path d="M1 4h2l4-3v10L3 8H1z" fill="#eee" /><circle cx="9" cy="9" r="3" fill="#d22" /><path d="M7.500 7.500l3 3" stroke="#fff" /></TrayButton>
        <div className="ml-1.5 text-center text-[10px] leading-[14px]">
          <div>12:41 PM</div>
          <div>9/6/2014</div>
        </div>
      </div>
    </div>
  )
}

function TaskButton({ label, state, children }: { label: string, state?: 'open' | 'active', children: ReactNode }) {
  return (
    <button
      aria-label={label}
      className={clsx(
        'mr-0.5 flex h-full w-10 items-center justify-center rounded-sm border',
        !state && 'border-transparent',
        state === 'open' && 'border-[#5f8ddc] bg-linear-to-b from-[#6f99e2] to-[#2f66ca]',
        state === 'active' && 'border-[#c8daf8] bg-linear-to-b from-[#dfe8f8] to-[#9ab8ea]',
      )}
    >
      <svg viewBox="0 0 28 28" className="h-[26px] w-[26px]">{children}</svg>
    </button>
  )
}

function TrayButton({ label, children }: { label: string, children: ReactNode }) {
  return (
    <button aria-label={label}><svg viewBox="0 0 13 13" className="h-[13px] w-[13px]">{children}</svg></button>
  )
}

function InventorLogo({ className }: { className?: string }) {
  return (
    <svg viewBox="0 0 16 20" className={className}>
      <path d="M3 0h10v4l-2 .5V10l2 1v4H3v-4l2-1V4.500L3 4z" fill="#e8762b" />
      <path d="M8 0h5v4l-2 .5V10l2 1v4H8z" fill="#c2540f" />
      <text x="8" y="20" textAnchor="middle" fontSize="5" fontWeight="700" fill="#333">PRO</text>
    </svg>
  )
}
